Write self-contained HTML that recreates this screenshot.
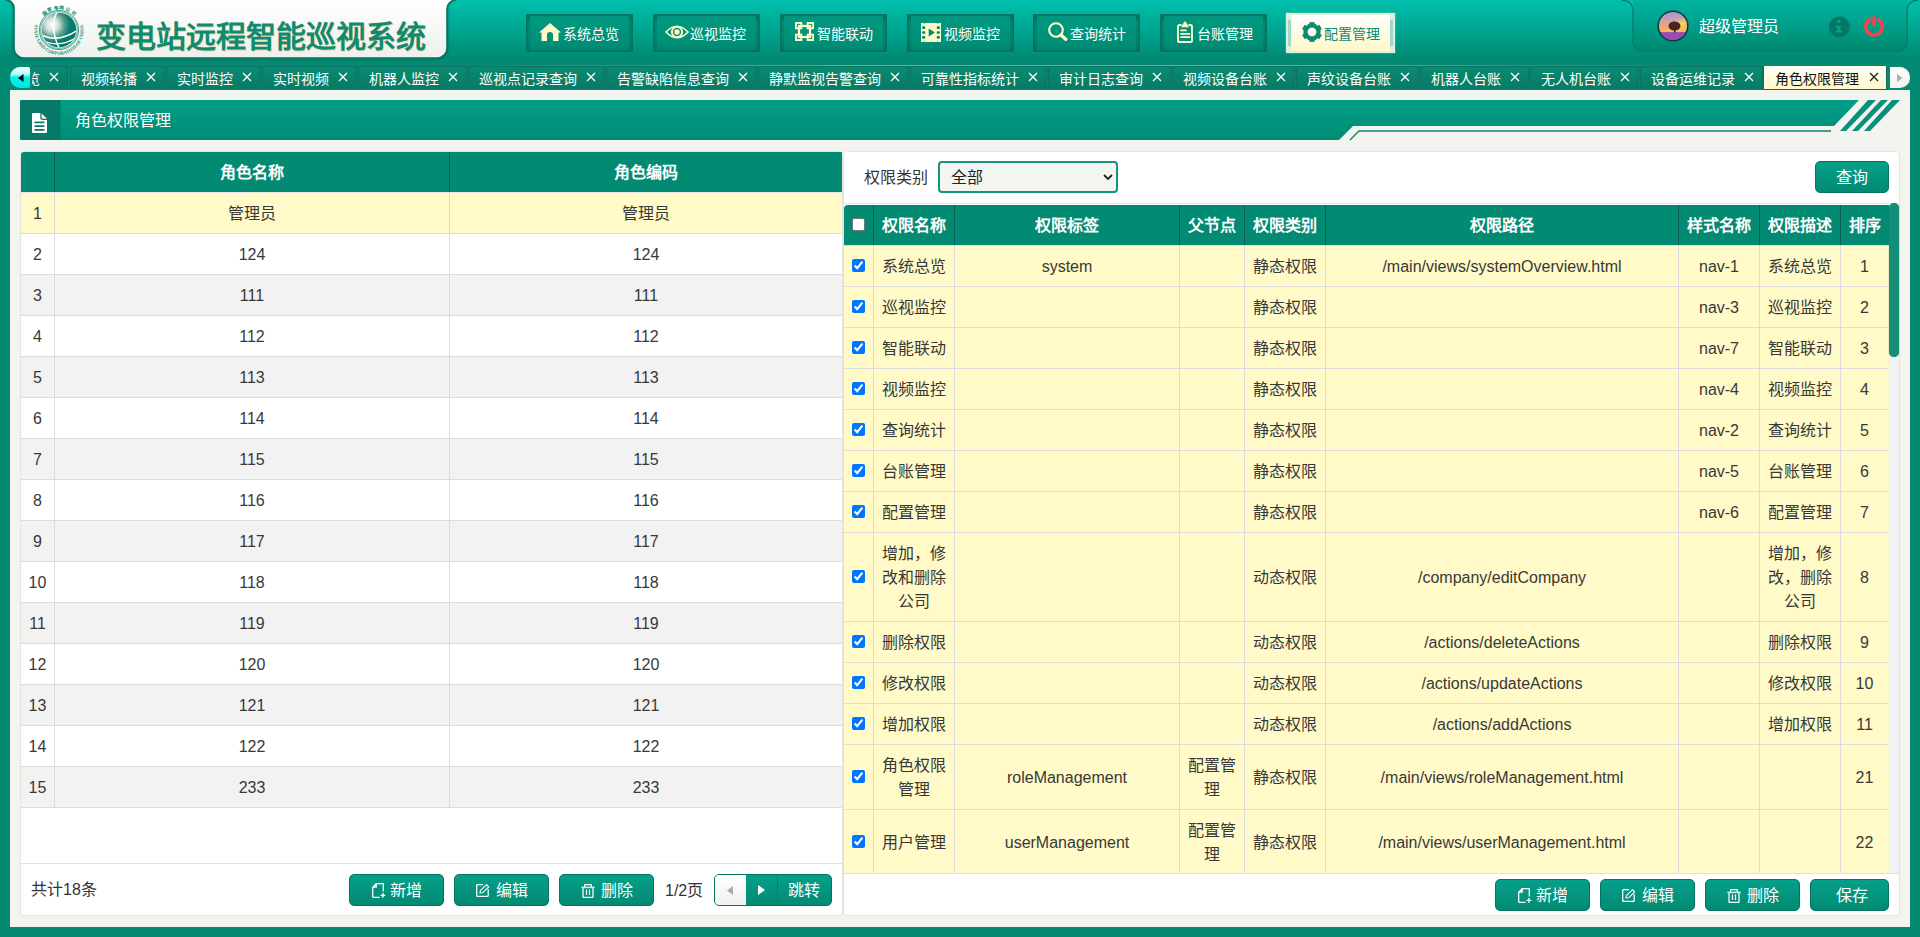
<!DOCTYPE html><html lang="zh-CN"><head><meta charset="utf-8"><style>
*{box-sizing:border-box;margin:0;padding:0}
html,body{width:1920px;height:937px;overflow:hidden}
body{position:relative;background:#058a72;font-family:"Liberation Sans",sans-serif;color:#333}
.abs{position:absolute}
#hdr{position:absolute;left:0;top:0;width:1920px;height:62px;background:linear-gradient(#00c0ae 0%,#00aa95 40%,#008c74 92%,#038a72 100%)}
#logo{position:absolute;left:14px;top:-12px;width:434px;height:70px;border-radius:0 0 12px 12px;background:linear-gradient(#ffffff,#eef1ed);box-shadow:0 0 0 2px #0a7a66,0 1px 2px 2px rgba(0,70,50,.5)}
#title{position:absolute;left:96px;top:12px;font-size:30px;font-weight:900;color:#0f8a73;letter-spacing:0px;white-space:nowrap;text-shadow:1px 1px 0 #f0d8a0}
.nav{position:absolute;top:14px;width:107px;height:38px;background:linear-gradient(#019a82,#008b73);border:1px solid #047462;box-shadow:inset 0 0 0 1px rgba(0,110,90,.45),inset 0 0 4px rgba(0,80,65,.35);color:#fff;font-size:14px;line-height:36px;white-space:nowrap}
.nav::before,.nav::after{content:'';position:absolute;top:0;width:3px;height:36px;background:linear-gradient(#047462 0,#047462 5px,rgba(4,116,98,.35) 5px,rgba(4,116,98,.35) 31px,#047462 31px)}
.nav::before{left:0}.nav::after{right:0}
.nav.act::before,.nav.act::after{background:linear-gradient(#dceee4 0,#dceee4 5px,#9ed8c8 5px,#9ed8c8 31px,#dceee4 31px)}
.nav svg{position:absolute}
.nav span{position:absolute;top:0}
.nav.act{background:linear-gradient(#ffffff,#fff7c8);border:1px solid #e4f0dc;color:#0b8a72;box-shadow:0 0 1px 1px #d8efe0}
#user{position:absolute;left:1633px;top:-14px;width:275px;height:65px;border:none;border-radius:0 0 12px 12px;background:linear-gradient(#00bcaa 0%,#00a893 45%,#00886f 100%)}
#tabbar{position:absolute;left:0;top:62px;width:1920px;height:28px;background:#048a72}
#tabclip{position:absolute;left:32px;top:66px;width:1856px;height:24px;overflow:hidden}
.tab{position:absolute;top:0;height:23px;background:linear-gradient(#0a8a72,#067a64);border:1px solid #0a7361;border-bottom:none;border-radius:3px 3px 0 0;color:#fff;font-size:14px;line-height:24px;white-space:nowrap}
.tab .t{position:absolute;left:10px;top:0}
.tab .x{position:absolute;right:8px;top:5px;color:#fff}
.tab.act{background:linear-gradient(#fffffa,#fff8c8);color:#111;border-color:#fffbe0;border-radius:0;box-shadow:0 0 0 1px #05705e}
.tab.act .x{right:6px}
.tab.act .x{color:#222}
#content{position:absolute;left:10px;top:90px;width:1900px;height:837px;background:#f3f4f0}
.panel{position:absolute;top:151px;height:765px;background:#fff;border:1px solid #e2e4e0;border-radius:4px}
.cell{position:absolute;text-align:center;font-size:16px;line-height:24px;color:#383838}
.hcell{position:absolute;text-align:center;font-size:16px;font-weight:bold;color:#fff;line-height:42px}
.btn{position:absolute;height:32px;border-radius:5px;background:linear-gradient(#05a08a,#028a72);border:1px solid #03745f;color:#fff;font-size:16px;line-height:30px;text-align:center;white-space:nowrap}
.btn svg{vertical-align:-2px;margin-right:6px}
</style></head><body>
<div id="hdr"></div>
<svg class="abs" style="left:0;top:0" width="470" height="64" viewBox="0 0 470 64"><defs><linearGradient id="lg" x1="0" y1="0" x2="0" y2="1"><stop offset="0" stop-color="#ffffff"/><stop offset="1" stop-color="#edf0ec"/></linearGradient><filter id="lsh" x="-5%" y="-20%" width="110%" height="140%"><feGaussianBlur stdDeviation="0.8"/></filter></defs>
<path d="M6 -1 A8 9 0 0 1 14 8 V48 A10 10 0 0 0 24 58 H437 A10 10 0 0 0 447 48 V9 A9 9 0 0 1 456 -1" fill="none" stroke="#04604f" stroke-width="3" opacity="0.55" filter="url(#lsh)"/>
<path d="M6 0 A8 8 0 0 1 14 8 V48 A10 10 0 0 0 24 58 H437 A10 10 0 0 0 447 48 V9 A9 9 0 0 1 456 0 Z" fill="url(#lg)"/>
<path d="M6 0 A8 8 0 0 1 14 8 V48 A10 10 0 0 0 24 58 H437 A10 10 0 0 0 447 48 V9 A9 9 0 0 1 456 0" fill="none" stroke="#057562" stroke-width="1.6"/>
</svg>
<svg class="abs" style="left:33px;top:4px" width="52" height="52" viewBox="0 0 52 52">
<defs>
<radialGradient id="glb" cx="0.3" cy="0.35" r="0.75"><stop offset="0" stop-color="#ffffff"/><stop offset="0.25" stop-color="#d0e0da"/><stop offset="0.5" stop-color="#4a9a88"/><stop offset="0.7" stop-color="#087c6a"/><stop offset="1" stop-color="#067a68"/></radialGradient>
<path id="topArc" d="M11.3 11.3 A20.8 20.8 0 0 1 40.7 11.3"/>
<path id="botArc" d="M2.9 17.6 A24.6 24.6 0 1 0 49.1 17.6"/>
<clipPath id="gclip"><circle cx="26" cy="26" r="17.3"/></clipPath>
</defs>
<text font-size="4.6" font-weight="bold" fill="#0f8a73"><textPath href="#topArc" startOffset="50%" text-anchor="middle" textLength="34" lengthAdjust="spacing">国家电网公司</textPath></text>
<text font-family="Liberation Serif" font-size="4.6" font-weight="bold" fill="#0f8a73"><textPath href="#botArc" startOffset="50%" text-anchor="middle" textLength="88" lengthAdjust="spacing">STATE GRID CORPORATION OF CHINA</textPath></text>
<circle cx="26" cy="26" r="19.6" fill="none" stroke="#0f8a73" stroke-width="0.8"/>
<circle cx="26" cy="26" r="18.4" fill="none" stroke="#0f8a73" stroke-width="0.6"/>
<circle cx="26" cy="26" r="17.3" fill="url(#glb)"/>
<g clip-path="url(#gclip)" fill="none" stroke="#fff">
<path d="M7 30 Q24 40 45 26" stroke-width="1.6"/>
<path d="M9 36 Q26 45 44 33" stroke-width="1.1"/>
<path d="M24 8 Q16 24 27 46" stroke-width="1.5"/>
</g>
</svg>
<div id="title">变电站远程智能巡视系统</div>
<div class="nav" style="left:526px"><svg width="22" height="18" viewBox="0 0 22 18" style="left:12px;top:8px"><path d="M11 0 L22 9.5 L19.5 9.5 L19.5 18 L14 18 L14 11.5 Q14 9 11 9 Q8 9 8 11.5 L8 18 L2.5 18 L2.5 9.5 L0 9.5 Z" fill="#fff9c8"/></svg><span style="left:36px;top:1px">系统总览</span></div>
<div class="nav" style="left:653px"><svg width="24" height="16" viewBox="0 0 24 16" style="left:11px;top:9px"><path d="M1 8 Q12 -3.5 23 8 Q12 19.5 1 8 Z" fill="none" stroke="#fff9c8" stroke-width="1.7"/><circle cx="12" cy="8" r="5.1" fill="none" stroke="#fff9c8" stroke-width="1.9"/><circle cx="12" cy="8" r="2.7" fill="#fff9c8"/></svg><span style="left:36px;top:1px">巡视监控</span></div>
<div class="nav" style="left:780px"><svg width="19" height="19" viewBox="0 0 19 19" style="left:14px;top:7px"><g fill="none" stroke="#fff9c8"><g stroke-width="1.9"><rect x="0.95" y="0.95" width="5.4" height="5.4"/><rect x="12.65" y="0.95" width="5.4" height="5.4"/><rect x="0.95" y="12.65" width="5.4" height="5.4"/><rect x="12.65" y="12.65" width="5.4" height="5.4"/></g><rect x="4" y="4" width="11" height="11" stroke-width="2.2"/></g></svg><span style="left:36px;top:1px">智能联动</span></div>
<div class="nav" style="left:907px"><svg width="20" height="19" viewBox="0 0 20 19" style="left:13px;top:8px"><path d="M0 0 H2.5 Q3.5 1 4.5 0 H15.5 Q16.5 1 17.5 0 H20 V19 H17.5 Q16.5 18 15.5 19 H4.5 Q3.5 18 2.5 19 H0 Z" fill="#fff9c8"/><g fill="#08886f"><rect x="1.2" y="3.3" width="3" height="2.6" rx="0.6"/><rect x="1.2" y="8.2" width="3" height="2.6" rx="0.6"/><rect x="1.2" y="13.1" width="3" height="2.6" rx="0.6"/><rect x="15.8" y="3.3" width="3" height="2.6" rx="0.6"/><rect x="15.8" y="8.2" width="3" height="2.6" rx="0.6"/><rect x="15.8" y="13.1" width="3" height="2.6" rx="0.6"/><path d="M7.7 5.5 L14 9.5 L7.7 13.5 Z"/></g></svg><span style="left:36px;top:1px">视频监控</span></div>
<div class="nav" style="left:1033px"><svg width="20" height="19" viewBox="0 0 20 19" style="left:14px;top:7px"><circle cx="8" cy="8" r="6.8" fill="none" stroke="#fff9c8" stroke-width="2.1"/><path d="M13 13 L17.8 17.3" stroke="#fff9c8" stroke-width="3.4" stroke-linecap="round"/></svg><span style="left:36px;top:1px">查询统计</span></div>
<div class="nav" style="left:1160px"><svg width="16" height="22" viewBox="0 0 16 22" style="left:16px;top:6px"><path d="M4.5 4 H2.6 Q1 4 1 5.6 V19.4 Q1 21 2.6 21 H13.4 Q15 21 15 19.4 V5.6 Q15 4 13.4 4 H11.5" fill="none" stroke="#fff9c8" stroke-width="1.9"/><path d="M4 6.2 L7.2 0.8 Q8 0 8.8 0.8 L12 6.2 Z" fill="#fff9c8"/><path d="M4 9.3 H9 M4 12.8 H12.5 M4 16.2 H12.5" stroke="#fff9c8" stroke-width="1.7" stroke-linecap="round"/></svg><span style="left:36px;top:1px">台账管理</span></div>
<div class="nav act" style="left:1287px"><svg width="20" height="20" viewBox="0 0 20 20" style="left:14px;top:7px"><path fill-rule="evenodd" stroke="#0b8a72" stroke-width="0.6" stroke-linejoin="round" d="M5.85 2.81 L7.57 2.06 L7.92 0.22 L12.08 0.22 L12.43 2.06 L14.15 2.81 L15.66 3.93 L17.43 3.31 L19.51 6.91 L18.09 8.13 L18.30 10.00 L18.09 11.87 L19.51 13.09 L17.43 16.69 L15.66 16.07 L14.15 17.19 L12.43 17.94 L12.08 19.78 L7.92 19.78 L7.57 17.94 L5.85 17.19 L4.34 16.07 L2.57 16.69 L0.49 13.09 L1.91 11.87 L1.70 10.00 L1.91 8.13 L0.49 6.91 L2.57 3.31 L4.34 3.93 Z M10 5.3 A4.7 4.7 0 1 0 10 14.7 A4.7 4.7 0 1 0 10 5.3 Z" fill="#0b8a72"/></svg><span style="left:36px;top:1px">配置管理</span></div>
<div id="user"></div>
<svg class="abs" style="left:1620px;top:0" width="300" height="54"><path d="M2 0.3 Q13 0.3 13 12 V41 Q13 51 23 51 H277 Q287 51 287 41 V12 Q287 0.3 298 0.3" fill="none" stroke="#067a66" stroke-width="1.2"/></svg>
<svg class="abs" style="left:1657px;top:10px" width="32" height="32" viewBox="0 0 32 32">
<defs><linearGradient id="sky" x1="0" y1="0" x2="0" y2="1"><stop offset="0" stop-color="#9c94cc"/><stop offset="0.3" stop-color="#c8a0b8"/><stop offset="0.5" stop-color="#f0a478"/><stop offset="0.68" stop-color="#f8b860"/><stop offset="0.7" stop-color="#a058b0"/><stop offset="1" stop-color="#9048a8"/></linearGradient>
<radialGradient id="sun" cx="0.8" cy="0.64" r="0.3"><stop offset="0" stop-color="#ffe040" stop-opacity="0.9"/><stop offset="1" stop-color="#ffe040" stop-opacity="0"/></radialGradient>
<clipPath id="cc"><circle cx="16" cy="16" r="14"/></clipPath></defs>
<circle cx="16" cy="16" r="15.6" fill="#0c3842"/>
<g clip-path="url(#cc)"><rect x="0" y="0" width="32" height="32" fill="url(#sky)"/><rect x="0" y="0" width="32" height="22" fill="url(#sun)"/>
<path d="M3 9 Q8 8 11 10" stroke="#e89088" stroke-width="1" fill="none" opacity="0.7"/>
<ellipse cx="17.5" cy="16" rx="6" ry="4.6" fill="#4a2222"/><rect x="17" y="19" width="1.4" height="3.5" fill="#3a1a1a"/>
<path d="M2 24 Q16 22 30 23 V32 H2 Z" fill="#9a4cb0"/></g>
</svg>
<div class="abs" style="left:1699px;top:15px;font-size:16px;color:#fff;white-space:nowrap;line-height:24px">超级管理员</div>
<svg class="abs" style="left:1829px;top:16px" width="21" height="22" viewBox="0 0 21 22"><circle cx="10.4" cy="10.8" r="10.4" fill="#037766"/><rect x="8.2" y="4" width="3.3" height="3" fill="#03a08a"/><path d="M6.5 9.4 H11.5 V14.8 H13.5 V16.5 H6.5 V14.8 H8.2 V11.2 H6.5 Z" fill="#03a08a"/></svg>
<svg class="abs" style="left:1863px;top:15px" width="22" height="23" viewBox="0 0 22 23"><path d="M15.49 4.68 A8.25 8.25 0 1 1 6.51 4.68" fill="none" stroke="#fc4048" stroke-width="3.4" stroke-linecap="round"/><path d="M11 2.8 V9.6" stroke="#fc4048" stroke-width="3.6" stroke-linecap="round"/></svg>
<div id="tabbar"></div>
<div class="abs" style="left:450px;top:65px;width:1250px;height:1px;background:linear-gradient(to right,rgba(0,224,200,0),#00dcc4 35%,#00dcc4 65%,rgba(0,224,200,0))"></div>
<div id="tabclip">
<div class="tab" style="left:-59px;width:95px"><span class="t">系统总览</span><svg class="x" width="10" height="10" viewBox="0 0 10 10"><path d="M1 1 L9 9 M9 1 L1 9" stroke="currentColor" stroke-width="1.3"/></svg></div>
<div class="tab" style="left:38px;width:95px"><span class="t">视频轮播</span><svg class="x" width="10" height="10" viewBox="0 0 10 10"><path d="M1 1 L9 9 M9 1 L1 9" stroke="currentColor" stroke-width="1.3"/></svg></div>
<div class="tab" style="left:134px;width:95px"><span class="t">实时监控</span><svg class="x" width="10" height="10" viewBox="0 0 10 10"><path d="M1 1 L9 9 M9 1 L1 9" stroke="currentColor" stroke-width="1.3"/></svg></div>
<div class="tab" style="left:230px;width:95px"><span class="t">实时视频</span><svg class="x" width="10" height="10" viewBox="0 0 10 10"><path d="M1 1 L9 9 M9 1 L1 9" stroke="currentColor" stroke-width="1.3"/></svg></div>
<div class="tab" style="left:326px;width:109px"><span class="t">机器人监控</span><svg class="x" width="10" height="10" viewBox="0 0 10 10"><path d="M1 1 L9 9 M9 1 L1 9" stroke="currentColor" stroke-width="1.3"/></svg></div>
<div class="tab" style="left:436px;width:137px"><span class="t">巡视点记录查询</span><svg class="x" width="10" height="10" viewBox="0 0 10 10"><path d="M1 1 L9 9 M9 1 L1 9" stroke="currentColor" stroke-width="1.3"/></svg></div>
<div class="tab" style="left:574px;width:151px"><span class="t">告警缺陷信息查询</span><svg class="x" width="10" height="10" viewBox="0 0 10 10"><path d="M1 1 L9 9 M9 1 L1 9" stroke="currentColor" stroke-width="1.3"/></svg></div>
<div class="tab" style="left:726px;width:151px"><span class="t">静默监视告警查询</span><svg class="x" width="10" height="10" viewBox="0 0 10 10"><path d="M1 1 L9 9 M9 1 L1 9" stroke="currentColor" stroke-width="1.3"/></svg></div>
<div class="tab" style="left:878px;width:137px"><span class="t">可靠性指标统计</span><svg class="x" width="10" height="10" viewBox="0 0 10 10"><path d="M1 1 L9 9 M9 1 L1 9" stroke="currentColor" stroke-width="1.3"/></svg></div>
<div class="tab" style="left:1016px;width:123px"><span class="t">审计日志查询</span><svg class="x" width="10" height="10" viewBox="0 0 10 10"><path d="M1 1 L9 9 M9 1 L1 9" stroke="currentColor" stroke-width="1.3"/></svg></div>
<div class="tab" style="left:1140px;width:123px"><span class="t">视频设备台账</span><svg class="x" width="10" height="10" viewBox="0 0 10 10"><path d="M1 1 L9 9 M9 1 L1 9" stroke="currentColor" stroke-width="1.3"/></svg></div>
<div class="tab" style="left:1264px;width:123px"><span class="t">声纹设备台账</span><svg class="x" width="10" height="10" viewBox="0 0 10 10"><path d="M1 1 L9 9 M9 1 L1 9" stroke="currentColor" stroke-width="1.3"/></svg></div>
<div class="tab" style="left:1388px;width:109px"><span class="t">机器人台账</span><svg class="x" width="10" height="10" viewBox="0 0 10 10"><path d="M1 1 L9 9 M9 1 L1 9" stroke="currentColor" stroke-width="1.3"/></svg></div>
<div class="tab" style="left:1498px;width:109px"><span class="t">无人机台账</span><svg class="x" width="10" height="10" viewBox="0 0 10 10"><path d="M1 1 L9 9 M9 1 L1 9" stroke="currentColor" stroke-width="1.3"/></svg></div>
<div class="tab" style="left:1608px;width:123px"><span class="t">设备运维记录</span><svg class="x" width="10" height="10" viewBox="0 0 10 10"><path d="M1 1 L9 9 M9 1 L1 9" stroke="currentColor" stroke-width="1.3"/></svg></div>
<div class="tab act" style="left:1732px;width:122px"><span class="t">角色权限管理</span><svg class="x" width="10" height="10" viewBox="0 0 10 10"><path d="M1 1 L9 9 M9 1 L1 9" stroke="currentColor" stroke-width="1.3"/></svg></div>
</div>
<div class="abs" style="left:10px;top:67px;width:20px;height:21px;border-radius:10px 2px 2px 10px;background:linear-gradient(#ffffff 0%,#b0fcf6 35%,#00f2ea 50%,#00e6de 100%)"></div>
<svg class="abs" style="left:18px;top:74px" width="6" height="8"><path d="M5.5 0 V8 L0 4 Z" fill="#000"/></svg>
<div class="abs" style="left:1890px;top:67px;width:20px;height:21px;border-radius:0 10px 10px 0;background:linear-gradient(#ffffff,#eff1ed)"></div>
<svg class="abs" style="left:1897px;top:74px" width="6" height="8"><path d="M0 0 V8 L5.5 4 Z" fill="#b0b0b0"/></svg>
<div id="content"></div>
<svg class="abs" style="left:20px;top:100px" width="1890" height="42" viewBox="0 0 1890 42">
<defs><linearGradient id="tb" x1="0" y1="0" x2="0" y2="1"><stop offset="0" stop-color="#019e88"/><stop offset="1" stop-color="#028b74"/></linearGradient></defs>
<path d="M0 2 Q0 0 2 0 H1839 L1814 26 H1333 L1319 40 H2 Q0 40 0 38 Z" fill="url(#tb)"/>
<path d="M0 2 Q0 0 2 0 H40 V40 H2 Q0 40 0 38 Z" fill="#067a66"/><rect x="39.5" y="0" width="0.8" height="40" fill="#05705c"/>
<path d="M1330 40 L1339 31 H1811" fill="none" stroke="#05846e" stroke-width="1.3"/>
<path d="M1820 31 L1848 0 H1856 L1826 31 Z" fill="#08917a"/>
<path d="M1832 31 L1861 0 H1868 L1838 31 Z" fill="#08917a"/>
<path d="M1844 31 L1872 0 H1880 L1850 31 Z" fill="#08917a"/>
</svg>
<svg class="abs" style="left:32px;top:113px" width="15" height="20" viewBox="0 0 15 20"><path d="M1 0 H8.3 V4.8 Q8.3 7 10.5 7 H15 V19 Q15 20 14 20 H1 Q0 20 0 19 V1 Q0 0 1 0 Z" fill="#fff"/><path d="M9.6 0.4 L15 5.8 H11.2 Q9.6 5.8 9.6 4.2 Z" fill="#fff"/><g fill="#067a66"><rect x="2.3" y="8.4" width="10.4" height="1.8" rx="0.9"/><rect x="2.3" y="12.2" width="10.4" height="1.8" rx="0.9"/><rect x="2.3" y="16" width="10.4" height="1.8" rx="0.9"/></g></svg>
<div class="abs" style="left:75px;top:109px;font-size:16px;color:#fff;line-height:24px;white-space:nowrap">角色权限管理</div>
<div class="panel" style="left:20px;width:823px">
<div class="abs" style="left:0;top:0;width:821px;height:40px;background:#038a72;border-radius:3px 0 0 0"></div>
<div class="abs" style="left:33px;top:0;width:1px;height:40px;background:#0a5e50"></div>
<div class="abs" style="left:428px;top:0;width:1px;height:40px;background:#0a5e50"></div>
<div class="hcell" style="left:34px;top:0;width:394px">角色名称</div>
<div class="hcell" style="left:429px;top:0;width:392px">角色编码</div>
<div class="abs" style="left:0;top:41px;width:821px;height:41px;background:#fffac8;border-bottom:1px solid #dcdcdc"></div>
<div class="cell" style="left:0;top:42px;width:33px;line-height:40px">1</div>
<div class="cell" style="left:34px;top:42px;width:394px;line-height:40px">管理员</div>
<div class="cell" style="left:429px;top:42px;width:392px;line-height:40px">管理员</div>
<div class="abs" style="left:0;top:82px;width:821px;height:41px;background:#ffffff;border-bottom:1px solid #dcdcdc"></div>
<div class="cell" style="left:0;top:83px;width:33px;line-height:40px">2</div>
<div class="cell" style="left:34px;top:83px;width:394px;line-height:40px">124</div>
<div class="cell" style="left:429px;top:83px;width:392px;line-height:40px">124</div>
<div class="abs" style="left:0;top:123px;width:821px;height:41px;background:#f2f2f2;border-bottom:1px solid #dcdcdc"></div>
<div class="cell" style="left:0;top:124px;width:33px;line-height:40px">3</div>
<div class="cell" style="left:34px;top:124px;width:394px;line-height:40px">111</div>
<div class="cell" style="left:429px;top:124px;width:392px;line-height:40px">111</div>
<div class="abs" style="left:0;top:164px;width:821px;height:41px;background:#ffffff;border-bottom:1px solid #dcdcdc"></div>
<div class="cell" style="left:0;top:165px;width:33px;line-height:40px">4</div>
<div class="cell" style="left:34px;top:165px;width:394px;line-height:40px">112</div>
<div class="cell" style="left:429px;top:165px;width:392px;line-height:40px">112</div>
<div class="abs" style="left:0;top:205px;width:821px;height:41px;background:#f2f2f2;border-bottom:1px solid #dcdcdc"></div>
<div class="cell" style="left:0;top:206px;width:33px;line-height:40px">5</div>
<div class="cell" style="left:34px;top:206px;width:394px;line-height:40px">113</div>
<div class="cell" style="left:429px;top:206px;width:392px;line-height:40px">113</div>
<div class="abs" style="left:0;top:246px;width:821px;height:41px;background:#ffffff;border-bottom:1px solid #dcdcdc"></div>
<div class="cell" style="left:0;top:247px;width:33px;line-height:40px">6</div>
<div class="cell" style="left:34px;top:247px;width:394px;line-height:40px">114</div>
<div class="cell" style="left:429px;top:247px;width:392px;line-height:40px">114</div>
<div class="abs" style="left:0;top:287px;width:821px;height:41px;background:#f2f2f2;border-bottom:1px solid #dcdcdc"></div>
<div class="cell" style="left:0;top:288px;width:33px;line-height:40px">7</div>
<div class="cell" style="left:34px;top:288px;width:394px;line-height:40px">115</div>
<div class="cell" style="left:429px;top:288px;width:392px;line-height:40px">115</div>
<div class="abs" style="left:0;top:328px;width:821px;height:41px;background:#ffffff;border-bottom:1px solid #dcdcdc"></div>
<div class="cell" style="left:0;top:329px;width:33px;line-height:40px">8</div>
<div class="cell" style="left:34px;top:329px;width:394px;line-height:40px">116</div>
<div class="cell" style="left:429px;top:329px;width:392px;line-height:40px">116</div>
<div class="abs" style="left:0;top:369px;width:821px;height:41px;background:#f2f2f2;border-bottom:1px solid #dcdcdc"></div>
<div class="cell" style="left:0;top:370px;width:33px;line-height:40px">9</div>
<div class="cell" style="left:34px;top:370px;width:394px;line-height:40px">117</div>
<div class="cell" style="left:429px;top:370px;width:392px;line-height:40px">117</div>
<div class="abs" style="left:0;top:410px;width:821px;height:41px;background:#ffffff;border-bottom:1px solid #dcdcdc"></div>
<div class="cell" style="left:0;top:411px;width:33px;line-height:40px">10</div>
<div class="cell" style="left:34px;top:411px;width:394px;line-height:40px">118</div>
<div class="cell" style="left:429px;top:411px;width:392px;line-height:40px">118</div>
<div class="abs" style="left:0;top:451px;width:821px;height:41px;background:#f2f2f2;border-bottom:1px solid #dcdcdc"></div>
<div class="cell" style="left:0;top:452px;width:33px;line-height:40px">11</div>
<div class="cell" style="left:34px;top:452px;width:394px;line-height:40px">119</div>
<div class="cell" style="left:429px;top:452px;width:392px;line-height:40px">119</div>
<div class="abs" style="left:0;top:492px;width:821px;height:41px;background:#ffffff;border-bottom:1px solid #dcdcdc"></div>
<div class="cell" style="left:0;top:493px;width:33px;line-height:40px">12</div>
<div class="cell" style="left:34px;top:493px;width:394px;line-height:40px">120</div>
<div class="cell" style="left:429px;top:493px;width:392px;line-height:40px">120</div>
<div class="abs" style="left:0;top:533px;width:821px;height:41px;background:#f2f2f2;border-bottom:1px solid #dcdcdc"></div>
<div class="cell" style="left:0;top:534px;width:33px;line-height:40px">13</div>
<div class="cell" style="left:34px;top:534px;width:394px;line-height:40px">121</div>
<div class="cell" style="left:429px;top:534px;width:392px;line-height:40px">121</div>
<div class="abs" style="left:0;top:574px;width:821px;height:41px;background:#ffffff;border-bottom:1px solid #dcdcdc"></div>
<div class="cell" style="left:0;top:575px;width:33px;line-height:40px">14</div>
<div class="cell" style="left:34px;top:575px;width:394px;line-height:40px">122</div>
<div class="cell" style="left:429px;top:575px;width:392px;line-height:40px">122</div>
<div class="abs" style="left:0;top:615px;width:821px;height:41px;background:#f2f2f2;border-bottom:1px solid #dcdcdc"></div>
<div class="cell" style="left:0;top:616px;width:33px;line-height:40px">15</div>
<div class="cell" style="left:34px;top:616px;width:394px;line-height:40px">233</div>
<div class="cell" style="left:429px;top:616px;width:392px;line-height:40px">233</div>
<div class="abs" style="left:0;top:40px;width:821px;height:1px;background:#e6e6e6"></div>
<div class="abs" style="left:33px;top:40px;width:1px;height:615px;background:#dcdcdc"></div>
<div class="abs" style="left:428px;top:40px;width:1px;height:615px;background:#dcdcdc"></div>
<div class="abs" style="left:0;top:711px;width:821px;height:1px;background:#e0e0e0"></div>
<div class="abs" style="left:10px;top:726px;font-size:16px;line-height:24px;color:#333;white-space:nowrap">共计18条</div>
</div>
<div class="btn" style="left:349px;top:874px;width:95px;height:32px;line-height:29px;padding-top:1px"><svg width="14" height="15" viewBox="0 0 14 15" style="position:relative;left:1px;margin-right:5px"><path d="M4.2 0.7 H11.3 V8.6 M7.6 14.3 H1.5 Q0.7 14.3 0.7 13.5 V4.2 L4.2 0.7 V4.2 H0.7" fill="none" stroke="#fff" stroke-width="1.3"/><path d="M10.9 10 V14.8 M8.5 12.4 H13.3" stroke="#fff" stroke-width="1.4"/></svg>新增</div>
<div class="btn" style="left:454px;top:874px;width:95px;height:32px;line-height:29px;padding-top:1px"><svg width="14" height="13" viewBox="0 0 14 13" style="vertical-align:-1px"><path d="M7 0.7 H1.6 Q0.7 0.7 0.7 1.6 V11.6 Q0.7 12.4 1.6 12.4 H11.3 Q12.2 12.4 12.2 11.6 V5.2" fill="none" stroke="#fff" stroke-width="1.3"/><path d="M3.9 9 L4.4 6.6 L10.5 0.7 L12.7 2.9 L6.6 8.8 Z" fill="none" stroke="#fff" stroke-width="1.1" stroke-linejoin="round"/></svg>编辑</div>
<div class="btn" style="left:559px;top:874px;width:95px;height:32px;line-height:29px;padding-top:1px"><svg width="14" height="14" viewBox="0 0 14 14"><path d="M0.3 3.4 H13.7" stroke="#cfe8e0" stroke-width="1.6"/><path d="M3.6 3 V1.3 Q3.6 0.6 4.3 0.6 H9.7 Q10.4 0.6 10.4 1.3 V3" fill="none" stroke="#fff" stroke-width="1.2"/><path d="M2 4 V12.7 Q2 13.4 2.7 13.4 H11.3 Q12 13.4 12 12.7 V4 M5.5 5.6 V10.9 M8.5 5.6 V10.9" fill="none" stroke="#fff" stroke-width="1.25"/></svg>删除</div>
<div class="abs" style="left:665px;top:879px;font-size:16px;line-height:24px;color:#333;white-space:nowrap">1/2页</div>
<div class="abs" style="left:714px;top:874px;width:118px;height:32px;border-radius:5px;border:1px solid #03745f;background:linear-gradient(#05a08a,#028a72);overflow:hidden">
<div class="abs" style="left:0;top:0;width:31px;height:30px;background:linear-gradient(#ffffff,#f0f0ee)"></div>
<svg class="abs" style="left:12px;top:11px" width="6" height="9"><path d="M6 0 V9 L0 4.5 Z" fill="#aaa"/></svg>
<svg class="abs" style="left:43px;top:10px" width="7" height="10"><path d="M0 0 V10 L7 5 Z" fill="#fff"/></svg>
<div class="abs" style="left:62px;top:0;width:1px;height:30px;background:#06806a"></div>
<div class="abs" style="left:62px;top:1px;width:54px;height:30px;line-height:30px;text-align:center;color:#fff;font-size:16px">跳转</div>
</div>
<div class="panel" style="left:843px;width:1057px">
<div class="abs" style="left:20px;top:14px;font-size:16px;line-height:24px;color:#333;white-space:nowrap">权限类别</div>
<div class="abs" style="left:94px;top:9px;width:180px;height:32px;border:2px solid #16947e;border-radius:4px;background:#f3f5f1;font-size:16px;line-height:30px;padding-left:11px;color:#222">全部</div>
<svg class="abs" style="left:259px;top:22px" width="10" height="7"><path d="M1 1 L5 5 L9 1" fill="none" stroke="#222" stroke-width="1.8"/></svg>
<div class="abs" style="left:0;top:51px;width:1055px;height:1px;background:#e6e6e6"></div>
<div class="abs" style="left:0;top:53px;width:1045px;height:40px;background:#038a72;border-radius:4px 0 0 0"></div>
<div class="abs" style="left:29px;top:53px;width:1px;height:40px;background:#0a5e50"></div>
<div class="abs" style="left:110px;top:53px;width:1px;height:40px;background:#0a5e50"></div>
<div class="abs" style="left:335px;top:53px;width:1px;height:40px;background:#0a5e50"></div>
<div class="abs" style="left:400px;top:53px;width:1px;height:40px;background:#0a5e50"></div>
<div class="abs" style="left:481px;top:53px;width:1px;height:40px;background:#0a5e50"></div>
<div class="abs" style="left:834px;top:53px;width:1px;height:40px;background:#0a5e50"></div>
<div class="abs" style="left:915px;top:53px;width:1px;height:40px;background:#0a5e50"></div>
<div class="abs" style="left:996px;top:53px;width:1px;height:40px;background:#0a5e50"></div>
<div class="hcell" style="left:30px;top:53px;width:80px">权限名称</div>
<div class="hcell" style="left:111px;top:53px;width:224px">权限标签</div>
<div class="hcell" style="left:336px;top:53px;width:64px">父节点</div>
<div class="hcell" style="left:401px;top:53px;width:80px">权限类别</div>
<div class="hcell" style="left:482px;top:53px;width:352px">权限路径</div>
<div class="hcell" style="left:835px;top:53px;width:80px">样式名称</div>
<div class="hcell" style="left:916px;top:53px;width:80px">权限描述</div>
<div class="hcell" style="left:997px;top:53px;width:47px">排序</div>
<div class="abs" style="left:8px;top:66px;width:13px;height:13px;background:#fff;border:1px solid #767676;border-radius:2px"></div>
<div class="abs" style="left:0;top:93px;width:1045px;height:1px;background:#e0e0e0"></div>
<div class="abs" style="left:0;top:94px;width:1045px;height:41px;background:#fffac8;border-bottom:1px solid #dcdcdc"></div>
<input type="checkbox" checked class="abs" style="left:8px;top:107px;width:13px;height:13px;margin:0">
<div class="cell" style="left:30px;top:103px;width:80px">系统总览</div>
<div class="cell" style="left:111px;top:103px;width:224px">system</div>
<div class="cell" style="left:401px;top:103px;width:80px">静态权限</div>
<div class="cell" style="left:482px;top:103px;width:352px">/main/views/systemOverview.html</div>
<div class="cell" style="left:835px;top:103px;width:80px">nav-1</div>
<div class="cell" style="left:916px;top:103px;width:80px">系统总览</div>
<div class="cell" style="left:997px;top:103px;width:47px">1</div>
<div class="abs" style="left:0;top:135px;width:1045px;height:41px;background:#fffac8;border-bottom:1px solid #dcdcdc"></div>
<input type="checkbox" checked class="abs" style="left:8px;top:148px;width:13px;height:13px;margin:0">
<div class="cell" style="left:30px;top:144px;width:80px">巡视监控</div>
<div class="cell" style="left:401px;top:144px;width:80px">静态权限</div>
<div class="cell" style="left:835px;top:144px;width:80px">nav-3</div>
<div class="cell" style="left:916px;top:144px;width:80px">巡视监控</div>
<div class="cell" style="left:997px;top:144px;width:47px">2</div>
<div class="abs" style="left:0;top:176px;width:1045px;height:41px;background:#fffac8;border-bottom:1px solid #dcdcdc"></div>
<input type="checkbox" checked class="abs" style="left:8px;top:189px;width:13px;height:13px;margin:0">
<div class="cell" style="left:30px;top:185px;width:80px">智能联动</div>
<div class="cell" style="left:401px;top:185px;width:80px">静态权限</div>
<div class="cell" style="left:835px;top:185px;width:80px">nav-7</div>
<div class="cell" style="left:916px;top:185px;width:80px">智能联动</div>
<div class="cell" style="left:997px;top:185px;width:47px">3</div>
<div class="abs" style="left:0;top:217px;width:1045px;height:41px;background:#fffac8;border-bottom:1px solid #dcdcdc"></div>
<input type="checkbox" checked class="abs" style="left:8px;top:230px;width:13px;height:13px;margin:0">
<div class="cell" style="left:30px;top:226px;width:80px">视频监控</div>
<div class="cell" style="left:401px;top:226px;width:80px">静态权限</div>
<div class="cell" style="left:835px;top:226px;width:80px">nav-4</div>
<div class="cell" style="left:916px;top:226px;width:80px">视频监控</div>
<div class="cell" style="left:997px;top:226px;width:47px">4</div>
<div class="abs" style="left:0;top:258px;width:1045px;height:41px;background:#fffac8;border-bottom:1px solid #dcdcdc"></div>
<input type="checkbox" checked class="abs" style="left:8px;top:271px;width:13px;height:13px;margin:0">
<div class="cell" style="left:30px;top:267px;width:80px">查询统计</div>
<div class="cell" style="left:401px;top:267px;width:80px">静态权限</div>
<div class="cell" style="left:835px;top:267px;width:80px">nav-2</div>
<div class="cell" style="left:916px;top:267px;width:80px">查询统计</div>
<div class="cell" style="left:997px;top:267px;width:47px">5</div>
<div class="abs" style="left:0;top:299px;width:1045px;height:41px;background:#fffac8;border-bottom:1px solid #dcdcdc"></div>
<input type="checkbox" checked class="abs" style="left:8px;top:312px;width:13px;height:13px;margin:0">
<div class="cell" style="left:30px;top:308px;width:80px">台账管理</div>
<div class="cell" style="left:401px;top:308px;width:80px">静态权限</div>
<div class="cell" style="left:835px;top:308px;width:80px">nav-5</div>
<div class="cell" style="left:916px;top:308px;width:80px">台账管理</div>
<div class="cell" style="left:997px;top:308px;width:47px">6</div>
<div class="abs" style="left:0;top:340px;width:1045px;height:41px;background:#fffac8;border-bottom:1px solid #dcdcdc"></div>
<input type="checkbox" checked class="abs" style="left:8px;top:353px;width:13px;height:13px;margin:0">
<div class="cell" style="left:30px;top:349px;width:80px">配置管理</div>
<div class="cell" style="left:401px;top:349px;width:80px">静态权限</div>
<div class="cell" style="left:835px;top:349px;width:80px">nav-6</div>
<div class="cell" style="left:916px;top:349px;width:80px">配置管理</div>
<div class="cell" style="left:997px;top:349px;width:47px">7</div>
<div class="abs" style="left:0;top:381px;width:1045px;height:89px;background:#fffac8;border-bottom:1px solid #dcdcdc"></div>
<input type="checkbox" checked class="abs" style="left:8px;top:418px;width:13px;height:13px;margin:0">
<div class="cell" style="left:30px;top:390px;width:80px">增加，修<br>改和删除<br>公司</div>
<div class="cell" style="left:401px;top:414px;width:80px">动态权限</div>
<div class="cell" style="left:482px;top:414px;width:352px">/company/editCompany</div>
<div class="cell" style="left:916px;top:390px;width:80px">增加，修<br>改，删除<br>公司</div>
<div class="cell" style="left:997px;top:414px;width:47px">8</div>
<div class="abs" style="left:0;top:470px;width:1045px;height:41px;background:#fffac8;border-bottom:1px solid #dcdcdc"></div>
<input type="checkbox" checked class="abs" style="left:8px;top:483px;width:13px;height:13px;margin:0">
<div class="cell" style="left:30px;top:479px;width:80px">删除权限</div>
<div class="cell" style="left:401px;top:479px;width:80px">动态权限</div>
<div class="cell" style="left:482px;top:479px;width:352px">/actions/deleteActions</div>
<div class="cell" style="left:916px;top:479px;width:80px">删除权限</div>
<div class="cell" style="left:997px;top:479px;width:47px">9</div>
<div class="abs" style="left:0;top:511px;width:1045px;height:41px;background:#fffac8;border-bottom:1px solid #dcdcdc"></div>
<input type="checkbox" checked class="abs" style="left:8px;top:524px;width:13px;height:13px;margin:0">
<div class="cell" style="left:30px;top:520px;width:80px">修改权限</div>
<div class="cell" style="left:401px;top:520px;width:80px">动态权限</div>
<div class="cell" style="left:482px;top:520px;width:352px">/actions/updateActions</div>
<div class="cell" style="left:916px;top:520px;width:80px">修改权限</div>
<div class="cell" style="left:997px;top:520px;width:47px">10</div>
<div class="abs" style="left:0;top:552px;width:1045px;height:41px;background:#fffac8;border-bottom:1px solid #dcdcdc"></div>
<input type="checkbox" checked class="abs" style="left:8px;top:565px;width:13px;height:13px;margin:0">
<div class="cell" style="left:30px;top:561px;width:80px">增加权限</div>
<div class="cell" style="left:401px;top:561px;width:80px">动态权限</div>
<div class="cell" style="left:482px;top:561px;width:352px">/actions/addActions</div>
<div class="cell" style="left:916px;top:561px;width:80px">增加权限</div>
<div class="cell" style="left:997px;top:561px;width:47px">11</div>
<div class="abs" style="left:0;top:593px;width:1045px;height:65px;background:#fffac8;border-bottom:1px solid #dcdcdc"></div>
<input type="checkbox" checked class="abs" style="left:8px;top:618px;width:13px;height:13px;margin:0">
<div class="cell" style="left:30px;top:602px;width:80px">角色权限<br>管理</div>
<div class="cell" style="left:111px;top:614px;width:224px">roleManagement</div>
<div class="cell" style="left:336px;top:602px;width:64px">配置管<br>理</div>
<div class="cell" style="left:401px;top:614px;width:80px">静态权限</div>
<div class="cell" style="left:482px;top:614px;width:352px">/main/views/roleManagement.html</div>
<div class="cell" style="left:997px;top:614px;width:47px">21</div>
<div class="abs" style="left:0;top:658px;width:1045px;height:65px;background:#fffac8;border-bottom:1px solid #dcdcdc"></div>
<input type="checkbox" checked class="abs" style="left:8px;top:683px;width:13px;height:13px;margin:0">
<div class="cell" style="left:30px;top:679px;width:80px">用户管理</div>
<div class="cell" style="left:111px;top:679px;width:224px">userManagement</div>
<div class="cell" style="left:336px;top:667px;width:64px">配置管<br>理</div>
<div class="cell" style="left:401px;top:679px;width:80px">静态权限</div>
<div class="cell" style="left:482px;top:679px;width:352px">/main/views/userManagement.html</div>
<div class="cell" style="left:997px;top:679px;width:47px">22</div>
<div class="abs" style="left:29px;top:93px;width:1px;height:629px;background:#dcdcdc"></div>
<div class="abs" style="left:110px;top:93px;width:1px;height:629px;background:#dcdcdc"></div>
<div class="abs" style="left:335px;top:93px;width:1px;height:629px;background:#dcdcdc"></div>
<div class="abs" style="left:400px;top:93px;width:1px;height:629px;background:#dcdcdc"></div>
<div class="abs" style="left:481px;top:93px;width:1px;height:629px;background:#dcdcdc"></div>
<div class="abs" style="left:834px;top:93px;width:1px;height:629px;background:#dcdcdc"></div>
<div class="abs" style="left:915px;top:93px;width:1px;height:629px;background:#dcdcdc"></div>
<div class="abs" style="left:996px;top:93px;width:1px;height:629px;background:#dcdcdc"></div>
<div class="abs" style="left:0;top:721px;width:1055px;height:42px;background:#fff;border-top:1px solid #e0e0e0;border-radius:0 0 4px 4px"></div>
<div class="abs" style="left:1045px;top:53px;width:10px;height:668px;background:#f1f2f4"></div>
<div class="abs" style="left:1045px;top:51px;width:10px;height:154px;border-radius:5px;background:#168e77;box-shadow:0 0 1px #168e77"></div>
</div>
<div class="btn" style="left:1495px;top:879px;width:95px;height:32px;line-height:29px;padding-top:1px"><svg width="14" height="15" viewBox="0 0 14 15" style="position:relative;left:1px;margin-right:5px"><path d="M4.2 0.7 H11.3 V8.6 M7.6 14.3 H1.5 Q0.7 14.3 0.7 13.5 V4.2 L4.2 0.7 V4.2 H0.7" fill="none" stroke="#fff" stroke-width="1.3"/><path d="M10.9 10 V14.8 M8.5 12.4 H13.3" stroke="#fff" stroke-width="1.4"/></svg>新增</div>
<div class="btn" style="left:1600px;top:879px;width:95px;height:32px;line-height:29px;padding-top:1px"><svg width="14" height="13" viewBox="0 0 14 13" style="vertical-align:-1px"><path d="M7 0.7 H1.6 Q0.7 0.7 0.7 1.6 V11.6 Q0.7 12.4 1.6 12.4 H11.3 Q12.2 12.4 12.2 11.6 V5.2" fill="none" stroke="#fff" stroke-width="1.3"/><path d="M3.9 9 L4.4 6.6 L10.5 0.7 L12.7 2.9 L6.6 8.8 Z" fill="none" stroke="#fff" stroke-width="1.1" stroke-linejoin="round"/></svg>编辑</div>
<div class="btn" style="left:1705px;top:879px;width:95px;height:32px;line-height:29px;padding-top:1px"><svg width="14" height="14" viewBox="0 0 14 14"><path d="M0.3 3.4 H13.7" stroke="#cfe8e0" stroke-width="1.6"/><path d="M3.6 3 V1.3 Q3.6 0.6 4.3 0.6 H9.7 Q10.4 0.6 10.4 1.3 V3" fill="none" stroke="#fff" stroke-width="1.2"/><path d="M2 4 V12.7 Q2 13.4 2.7 13.4 H11.3 Q12 13.4 12 12.7 V4 M5.5 5.6 V10.9 M8.5 5.6 V10.9" fill="none" stroke="#fff" stroke-width="1.25"/></svg>删除</div>
<div class="btn" style="left:1810px;top:879px;width:79px;height:32px;line-height:29px;padding-top:1px"><span style="position:relative;left:2px">保存</span></div>
<div class="btn" style="left:1815px;top:161px;width:74px;height:32px;line-height:29px;padding-top:1px">查询</div>
</body></html>
